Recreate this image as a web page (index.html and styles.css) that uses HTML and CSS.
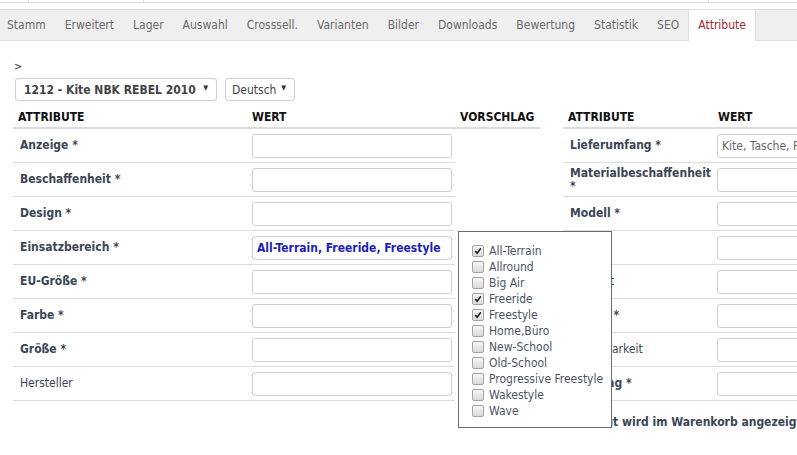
FILE: index.html
```html
<!DOCTYPE html>
<html lang="de">
<head>
<meta charset="utf-8">
<title>Attribute</title>
<link rel="stylesheet" href="styles.css">
</head>
<body>
<div class="topstrip">
  <span class="seg seg-a"></span><span class="seg seg-b"></span><span class="seg seg-c"></span><span class="seg seg-d"></span>
</div>
<nav class="tabs">
  <span class="tab first">Stamm</span>
  <span class="tab">Erweitert</span>
  <span class="tab">Lager</span>
  <span class="tab">Auswahl</span>
  <span class="tab">Crosssell.</span>
  <span class="tab">Varianten</span>
  <span class="tab">Bilder</span>
  <span class="tab">Downloads</span>
  <span class="tab">Bewertung</span>
  <span class="tab">Statistik</span>
  <span class="tab">SEO</span>
  <span class="tab active">Attribute</span>
</nav>
<main class="content">
  <div class="crumb">&gt;</div>
  <div class="selects">
    <div class="select select-product"><span class="sel-text">1212 - Kite NBK REBEL 2010</span><span class="arrow">▼</span></div>
    <div class="select select-lang"><span class="sel-text normal">Deutsch</span><span class="arrow">▼</span></div>
  </div>
  <div class="tables">
    <section class="attr-table left">
      <div class="row head">
        <div class="cell">ATTRIBUTE</div><div class="cell">WERT</div><div class="cell">VORSCHLAG</div>
      </div>
      <div class="row"><div class="cell label">Anzeige *</div><div class="cell"><span class="input"></span></div><div class="cell plain"></div></div>
      <div class="row"><div class="cell label">Beschaffenheit *</div><div class="cell"><span class="input"></span></div><div class="cell plain"></div></div>
      <div class="row"><div class="cell label">Design *</div><div class="cell"><span class="input"></span></div><div class="cell plain"></div></div>
      <div class="row"><div class="cell label">Einsatzbereich *</div><div class="cell"><span class="input value-blue">All-Terrain, Freeride, Freestyle</span></div>
        <div class="cell plain suggest">
          <div class="dropdown">
            <label class="opt"><span class="cb checked"><svg viewBox="0 0 12 12"><path d="M2.6 6.2 L4.9 8.6 L9.4 2.8"/></svg></span>All-Terrain</label>
            <label class="opt"><span class="cb"></span>Allround</label>
            <label class="opt"><span class="cb"></span>Big Air</label>
            <label class="opt"><span class="cb checked"><svg viewBox="0 0 12 12"><path d="M2.6 6.2 L4.9 8.6 L9.4 2.8"/></svg></span>Freeride</label>
            <label class="opt"><span class="cb checked"><svg viewBox="0 0 12 12"><path d="M2.6 6.2 L4.9 8.6 L9.4 2.8"/></svg></span>Freestyle</label>
            <label class="opt"><span class="cb"></span>Home,Büro</label>
            <label class="opt"><span class="cb"></span>New-School</label>
            <label class="opt"><span class="cb"></span>Old-School</label>
            <label class="opt"><span class="cb"></span>Progressive Freestyle</label>
            <label class="opt"><span class="cb"></span>Wakestyle</label>
            <label class="opt"><span class="cb"></span>Wave</label>
          </div>
        </div>
      </div>
      <div class="row"><div class="cell label">EU-Größe *</div><div class="cell"><span class="input"></span></div><div class="cell plain"></div></div>
      <div class="row"><div class="cell label">Farbe *</div><div class="cell"><span class="input"></span></div><div class="cell plain"></div></div>
      <div class="row"><div class="cell label">Größe *</div><div class="cell"><span class="input"></span></div><div class="cell plain"></div></div>
      <div class="row"><div class="cell label normal">Hersteller</div><div class="cell"><span class="input"></span></div><div class="cell plain"></div></div>
    </section>
    <section class="attr-table right">
      <div class="row head">
        <div class="cell">ATTRIBUTE</div><div class="cell">WERT</div>
      </div>
      <div class="row"><div class="cell label">Lieferumfang *</div><div class="cell"><span class="input value-grey">Kite, Tasche, Pumpe</span></div></div>
      <div class="row"><div class="cell label">Materialbeschaffenheit *</div><div class="cell"><span class="input"></span></div></div>
      <div class="row"><div class="cell label">Modell *</div><div class="cell"><span class="input"></span></div></div>
      <div class="row"><div class="cell label">Stil *</div><div class="cell"><span class="input"></span></div></div>
      <div class="row"><div class="cell label normal">Sportart</div><div class="cell"><span class="input"></span></div></div>
      <div class="row"><div class="cell label">Stärke *</div><div class="cell"><span class="input"></span></div></div>
      <div class="row"><div class="cell label normal">Verfügbarkeit</div><div class="cell"><span class="input"></span></div></div>
      <div class="row"><div class="cell label">Lenkung *</div><div class="cell"><span class="input"></span></div></div>
      <div class="note">Attribut wird im Warenkorb angezeigt</div>
    </section>
  </div>
</main>
</body>
</html>
```
FILE: styles.css
```css
html, body {
  margin: 0;
  padding: 0;
  overflow: hidden;
  background: #fff;
}
body {
  width: 797px;
  height: 455px;
  font-family: "DejaVu Sans Condensed", "DejaVu Sans", sans-serif;
  font-stretch: condensed;
  font-size: 12px;
  color: #3a4656;
}

.topstrip {
  display: flex;
  height: 2px;
  border-bottom: 1px solid #dcdcdc;
}
.seg { height: 2px; border-right: 1px solid #dcdcdc; }
.seg-a { width: 28px; }
.seg-b { width: 114px; }
.seg-c { width: 564px; }
.seg-d { flex: 1; border-right: 0; }

.tabs {
  display: flex;
  margin-top: 6px;
  height: 30px;
  background: #efefef;
  border-top: 1px solid #dedede;
  border-bottom: 1px solid #dedede;
}
.tab {
  padding: 0 9.5px;
  line-height: 30px;
  color: #6a6a6a;
  white-space: nowrap;
}
.tab.first { padding-left: 7px; }
.tab.active {
  background: #fff;
  color: #a0282d;
  border-left: 1px solid #dedede;
  border-right: 1px solid #dedede;
  height: 31px;
  margin-left: -1px;
}

.content {
  padding-left: 13px;
}
.crumb {
  margin-top: 19px;
  padding-left: 1px;
  font-size: 11px;
  line-height: 14px;
  color: #333;
}
.selects {
  display: flex;
  gap: 8px;
  margin-top: 4px;
  padding-left: 2px;
}
.select {
  display: flex;
  align-items: center;
  justify-content: space-between;
  height: 21px;
  border: 1px solid #cfcfcf;
  border-radius: 3px;
  padding: 0 8px 0 8px;
  background: #fff;
}
.select-product { width: 184px; }
.select-lang { width: 54px; padding-left: 6px; }
.sel-text {
  font-weight: bold;
  color: #444;
  font-size: 12px;
}
.sel-text.normal { font-weight: normal; }
.arrow {
  font-size: 7px;
  color: #333;
  position: relative;
  top: -2px;
}

.tables {
  display: flex;
  gap: 23px;
  margin-top: 7px;
}
.attr-table.left { width: 527px; flex: none; }
.attr-table.right { width: 400px; flex: none; }

.row {
  display: grid;
  height: 34px;
}
.left .row { grid-template-columns: 235px 207px 85px; }
.right .row { grid-template-columns: 150px 250px; }

.row.head { height: 21px; }
.head .cell {
  border-bottom: 2px solid #dcdcdc;
  font-weight: bold;
  color: #111;
  line-height: 19px;
  padding-left: 5px;
}
.left .head .cell:nth-child(2) { padding-left: 4px; }
.right .head .cell:nth-child(2) { padding-left: 5px; }

.cell {
  box-sizing: border-box;
  border-bottom: 1px solid #dcdcdc;
  display: flex;
  align-items: center;
}
.cell.plain { border-bottom: 0; }
.cell.label {
  font-weight: bold;
  line-height: 13px;
  padding-left: 7px;
  padding-right: 6px;
}
.cell.label.normal { font-weight: normal; }
.left .row:not(.head) .cell:nth-child(2) { padding-left: 4px; }
.right .row:not(.head) .cell:nth-child(2) { padding-left: 4px; }

.input {
  box-sizing: border-box;
  width: 200px;
  height: 24px;
  border: 1px solid #cfcfcf;
  border-radius: 3px;
  padding: 0 4px;
  line-height: 22px;
  white-space: nowrap;
  overflow: hidden;
}
.value-blue { color: #1e1eb4; font-weight: bold; }
.value-grey { color: #666; }

.suggest { position: relative; }
.dropdown {
  position: absolute;
  top: 0;
  left: 3px;
  z-index: 2;
  width: 129px;
  padding: 11px 10px 8px 13px;
  background: #fff;
  border: 1px solid #6b6b6b;
  display: flex;
  flex-direction: column;
}
.opt {
  display: flex;
  align-items: center;
  gap: 5px;
  height: 16px;
  line-height: 16px;
  color: #4a5566;
  white-space: nowrap;
}
.cb {
  flex: none;
  box-sizing: border-box;
  width: 12px;
  height: 12px;
  border: 1px solid #a3a3a3;
  border-radius: 2px;
  background: linear-gradient(#f7f7f7, #d9d9d9);
  display: flex;
}
.cb svg { width: 10px; height: 10px; }
.cb path {
  fill: none;
  stroke: #222;
  stroke-width: 1.9;
}

.note {
  padding-left: 7px;
  margin-top: 14px;
  line-height: 14px;
  font-weight: bold;
  white-space: nowrap;
}
```
